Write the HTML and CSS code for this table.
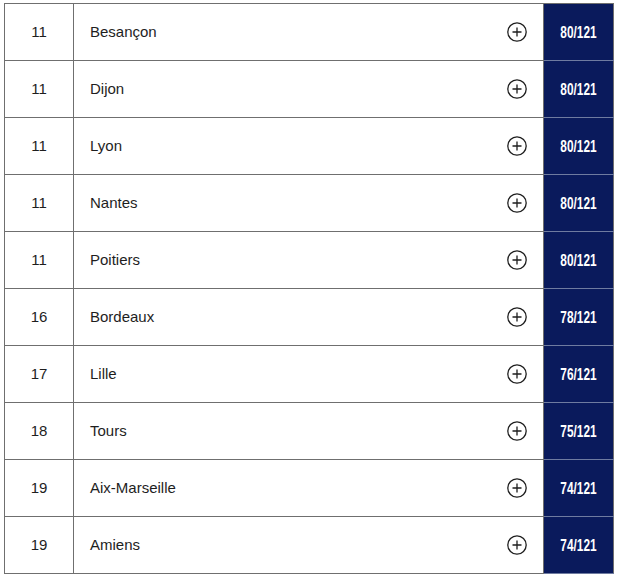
FILE: index.html
```html
<!DOCTYPE html>
<html lang="fr">
<head>
<meta charset="utf-8">
<link rel="stylesheet" href="styles.css">
</head>
<body>
<div class="wrap">
<table class="ranking">
<tbody>
<tr><td class="rank">11</td><td class="name">Besançon</td><td class="more"><svg class="plus" viewBox="0 0 20 20"><circle cx="10" cy="10" r="9.2"/><path d="M10 5.5v9M5.5 10h9"/></svg></td><td class="score"><span class="pts">80/121</span></td></tr>
<tr><td class="rank">11</td><td class="name">Dijon</td><td class="more"><svg class="plus" viewBox="0 0 20 20"><circle cx="10" cy="10" r="9.2"/><path d="M10 5.5v9M5.5 10h9"/></svg></td><td class="score"><span class="pts">80/121</span></td></tr>
<tr><td class="rank">11</td><td class="name">Lyon</td><td class="more"><svg class="plus" viewBox="0 0 20 20"><circle cx="10" cy="10" r="9.2"/><path d="M10 5.5v9M5.5 10h9"/></svg></td><td class="score"><span class="pts">80/121</span></td></tr>
<tr><td class="rank">11</td><td class="name">Nantes</td><td class="more"><svg class="plus" viewBox="0 0 20 20"><circle cx="10" cy="10" r="9.2"/><path d="M10 5.5v9M5.5 10h9"/></svg></td><td class="score"><span class="pts">80/121</span></td></tr>
<tr><td class="rank">11</td><td class="name">Poitiers</td><td class="more"><svg class="plus" viewBox="0 0 20 20"><circle cx="10" cy="10" r="9.2"/><path d="M10 5.5v9M5.5 10h9"/></svg></td><td class="score"><span class="pts">80/121</span></td></tr>
<tr><td class="rank">16</td><td class="name">Bordeaux</td><td class="more"><svg class="plus" viewBox="0 0 20 20"><circle cx="10" cy="10" r="9.2"/><path d="M10 5.5v9M5.5 10h9"/></svg></td><td class="score"><span class="pts">78/121</span></td></tr>
<tr><td class="rank">17</td><td class="name">Lille</td><td class="more"><svg class="plus" viewBox="0 0 20 20"><circle cx="10" cy="10" r="9.2"/><path d="M10 5.5v9M5.5 10h9"/></svg></td><td class="score"><span class="pts">76/121</span></td></tr>
<tr><td class="rank">18</td><td class="name">Tours</td><td class="more"><svg class="plus" viewBox="0 0 20 20"><circle cx="10" cy="10" r="9.2"/><path d="M10 5.5v9M5.5 10h9"/></svg></td><td class="score"><span class="pts">75/121</span></td></tr>
<tr><td class="rank">19</td><td class="name">Aix-Marseille</td><td class="more"><svg class="plus" viewBox="0 0 20 20"><circle cx="10" cy="10" r="9.2"/><path d="M10 5.5v9M5.5 10h9"/></svg></td><td class="score"><span class="pts">74/121</span></td></tr>
<tr><td class="rank">19</td><td class="name">Amiens</td><td class="more"><svg class="plus" viewBox="0 0 20 20"><circle cx="10" cy="10" r="9.2"/><path d="M10 5.5v9M5.5 10h9"/></svg></td><td class="score"><span class="pts">74/121</span></td></tr>
</tbody>
</table>
</div>
</body>
</html>
```

FILE: styles.css
```css
html, body {
  margin: 0;
  padding: 0;
  background: #ffffff;
}
.wrap {
  padding: 3px 4px 0 4px;
}
.ranking {
  border-collapse: collapse;
  width: 610px;
  table-layout: fixed;
  font-family: "Liberation Sans", Arial, sans-serif;
  font-size: 15px;
  color: #1e1e1e;
}
.ranking td {
  border: 1px solid #6f6f6f;
  height: 54px;
  padding: 0 0 2px 0;
  vertical-align: middle;
}
.rank {
  width: 68px;
  text-align: center;
}
.name {
  padding-left: 16px !important;
  border-right: none !important;
}
.more {
  width: 50px;
  border-left: none !important;
  text-align: left;
}
.plus {
  display: block;
  width: 20px;
  height: 20px;
  margin-left: 14px;
  margin-top: 1px;
  fill: none;
  stroke: #1e1e1e;
  stroke-width: 1.3;
}
.score {
  width: 69px;
  background: #0a1a5c;
  color: #ffffff;
  text-align: center;
  font-weight: bold;
  font-size: 16px;
  border-color: #6f6f6f #6f6f6f #6f7ba0 #6f6f6f !important;
}
.pts {
  display: inline-block;
  transform: scaleX(0.74);
  transform-origin: center;
  margin-top: 3px;
}
```
